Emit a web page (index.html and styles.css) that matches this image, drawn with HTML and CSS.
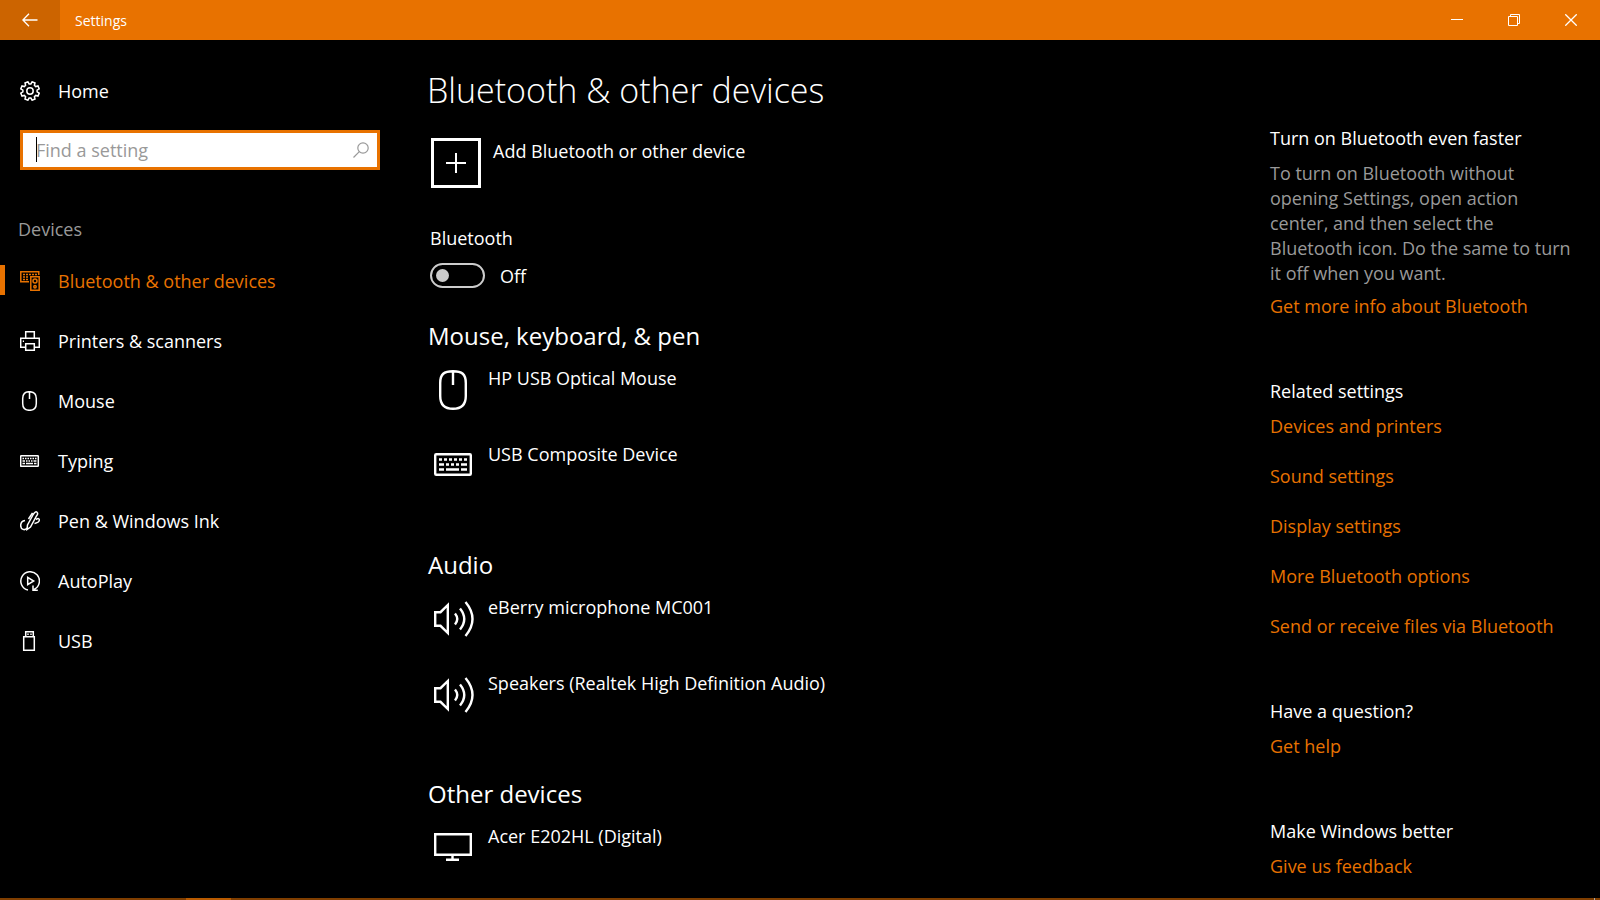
FILE: index.html
```html
<!DOCTYPE html>
<html lang="en">
<head>
<meta charset="utf-8">
<title>Settings</title>
<link rel="stylesheet" href="styles.css">
</head>
<body>
<div class="window">
  <header class="titlebar">
    <button class="back" aria-label="Back"><svg width="16" height="14" viewBox="0 0 16 14"><path d="M7 .8.9 7 7 13.200M1 7H15.500" /></svg></button>
    <span class="titlebar-name">Settings</span>
    <button class="caption" aria-label="Minimize"><svg width="12" height="12" viewBox="0 0 12 12"><path d="M0 5.500H12"/></svg></button>
    <button class="caption" aria-label="Restore"><svg width="12" height="12" viewBox="0 0 12 12"><path d="M.5 2.500H9.500V11.500H.5ZM2.500 2.500V.5H11.500V9.500H9.500"/></svg></button>
    <button class="caption" aria-label="Close"><svg width="12" height="12" viewBox="0 0 12 12"><path stroke-width="1.300" d="M.3.3 11.700 11.700M11.700.3.3 11.700"/></svg></button>
  </header>

  <div class="layout">
    <nav class="sidebar" aria-label="Settings">
      <a class="nav-link" href="#home">
        <svg width="20" height="20" viewBox="0 0 20 20"><path d="M9.100 2.900h1.800L12.100.8 15 2l-.6 2.300 1.300 1.300L18 5l1.200 2.900-2.100 1.200v1.800l2.100 1.200L18 15l-2.300-.6-1.300 1.300L15 18l-2.900 1.200-1.200-2.100H9.100l-1.200 2.100L5 18l.6-2.300-1.300-1.300L2 15 .8 12.100l2.100-1.200V9.100L.8 7.900 2 5l2.300.6 1.300-1.300L5 2 7.900.8Z"/><circle cx="10" cy="10" r="3.200"/></svg>
        Home
      </a>
      <div class="search">
        <input class="search-input" type="search" placeholder="Find a setting" aria-label="Find a setting">
        <span class="caret"></span>
        <svg class="search-icon" width="16" height="16" viewBox="0 0 16 16"><circle cx="10" cy="6" r="5.200"/><path d="M6.300 9.700.5 15.500"/></svg>
      </div>
      <h2 class="nav-title">Devices</h2>
      <a class="nav-link active" href="#bluetooth">
        <svg width="20" height="20" viewBox="0 0 20 20"><path d="M9 10.800H.8V.8H18.800V4"/><path stroke-width="1.500" stroke-dasharray="2 1" d="M3 3.500H17M3 6H9M3 8.500H9"/><path d="M10.800 5.800H19.200V19.200H10.800Z"/><circle cx="15" cy="10" r="2"/><circle cx="15" cy="15.800" r="1.200"/></svg>
        Bluetooth &amp; other devices
      </a>
      <a class="nav-link" href="#printers">
        <svg width="20" height="20" viewBox="0 0 20 20"><path d="M5.700 7V.7H14.300V7M5 16.300H.7V7.300H19.300V16.300H15M5.700 12.700H14.300V19.300H5.700Z"/><path d="M2.800 10.200H4"/></svg>
        Printers &amp; scanners
      </a>
      <a class="nav-link" href="#mouse">
        <svg width="20" height="20" viewBox="0 0 20 20"><path d="M2.700 7.500Q2.700.7 9.500.7T16.300 7.500V12.500Q16.300 19.300 9.500 19.300T2.700 12.500ZM9.500 1V8"/></svg>
        Mouse
      </a>
      <a class="nav-link" href="#typing">
        <svg width="20" height="20" viewBox="0 0 20 20"><rect x=".7" y="4.700" width="17.600" height="10.600" rx=".6"/><path stroke-width="1.500" d="M2.500 7.500h1.500m1 0h1.500m1 0H9m1 0h1.500m1 0H14m1 0h1.500M2.500 10H5m1 0h1.500m1 0H10m1 0h1.500m1 0h3M2.500 12.500H5m1 0h7m1 0h2.500"/></svg>
        Typing
      </a>
      <a class="nav-link" href="#pen">
        <svg width="20" height="20" viewBox="0 0 20 20"><path d="M5 9.500C2 10 .7 12 .7 14.500c0 4 4.300 5.500 6 2.500M7 18.500 7.500 14 13.200 3.500Q15.500-.3 17 1.300T16.500 5L10.500 16ZM8.500 8 12.500 1.800M16 8.500Q19.300 6.500 19.300 9T14.500 12.500"/></svg>
        Pen &amp; Windows Ink
      </a>
      <a class="nav-link" href="#autoplay">
        <svg width="20" height="20" viewBox="0 0 20 20"><path d="M8 19.100A9.300 9.300 0 1 1 14 18.500M13 14.500V19.200H17.800M7.700 6.300 13.700 10l-6 3.700Z"/></svg>
        AutoPlay
      </a>
      <a class="nav-link" href="#usb">
        <svg width="20" height="20" viewBox="0 0 20 20"><path d="M3.700 5.700H14.300V19.300H3.700ZM5.700 5.500V.7H13.300V5.500M8 2.500V4M11 2.500V4"/></svg>
        USB
      </a>
    </nav>

    <main class="main">
      <h1 class="page-title">Bluetooth &amp; other devices</h1>
      <button class="add">
        <span class="add-box"><svg width="20" height="20" viewBox="0 0 20 20"><path d="M10 0V20M0 10H20"/></svg></span>
        Add Bluetooth or other device
      </button>
      <div class="setting">
        <label for="bt">Bluetooth</label>
        <div class="toggle-row"><input class="toggle" id="bt" type="checkbox" role="switch"><span>Off</span></div>
      </div>

      <section class="group">
        <h2 class="group-title">Mouse, keyboard, &amp; pen</h2>
        <ul class="devices">
          <li class="device"><svg width="50" height="50" viewBox="0 0 50 50"><path d="M10.200 17C10.200 8 14 5.200 23 5.200S35.800 8 35.800 17V30Q35.800 42.800 23 42.800T10.200 30ZM23 5V19"/></svg>HP USB Optical Mouse</li>
          <li class="device"><svg width="50" height="50" viewBox="0 0 50 50"><rect x="5.200" y="12.200" width="35.600" height="20.600" rx="1"/><path d="M9 17.500h3m2 0h3m2 0h3m2 0h3m2 0h3m2 0h3M9 22.500h5m2 0h3m2 0h3m2 0h3m2 0h6M9 27.500h5m2 0h13m2 0h6"/></svg>USB Composite Device</li>
        </ul>
      </section>

      <section class="group">
        <h2 class="group-title">Audio</h2>
        <ul class="devices">
          <li class="device"><svg width="50" height="50" viewBox="0 0 50 50"><path d="M5.200 17.200H10.500L17.800 10V38L10.500 30.800H5.200ZM25 18.500Q29.500 24 25 29.500M30 13.500Q38.500 24 30 34.500M35.500 7Q49.500 24 35.500 41"/></svg>eBerry microphone MC001</li>
          <li class="device"><svg width="50" height="50" viewBox="0 0 50 50"><path d="M5.200 17.200H10.500L17.800 10V38L10.500 30.800H5.200ZM25 18.500Q29.500 24 25 29.500M30 13.500Q38.500 24 30 34.500M35.500 7Q49.500 24 35.500 41"/></svg>Speakers (Realtek High Definition Audio)</li>
        </ul>
      </section>

      <section class="group">
        <h2 class="group-title">Other devices</h2>
        <ul class="devices">
          <li class="device"><svg width="50" height="50" viewBox="0 0 50 50"><path d="M5.200 10.200H40.800V30.800H5.200ZM22.500 31V35.500M16 35.700H29"/></svg>Acer E202HL (Digital)</li>
        </ul>
      </section>
    </main>

    <aside class="aside">
      <section class="help">
        <h3 class="help-title">Turn on Bluetooth even faster</h3>
        <p class="help-text">To turn on Bluetooth without opening Settings, open action center, and then select the Bluetooth icon. Do the same to turn it off when you want.</p>
        <a class="help-more" href="#info">Get more info about Bluetooth</a>
      </section>
      <section class="help">
        <h3 class="help-title">Related settings</h3>
        <ul class="links">
          <li><a href="#printers">Devices and printers</a></li>
          <li><a href="#sound">Sound settings</a></li>
          <li><a href="#display">Display settings</a></li>
          <li><a href="#more">More Bluetooth options</a></li>
          <li><a href="#files">Send or receive files via Bluetooth</a></li>
        </ul>
      </section>
      <section class="help">
        <h3 class="help-title">Have a question?</h3>
        <a href="#help">Get help</a>
      </section>
      <section class="help">
        <h3 class="help-title">Make Windows better</h3>
        <a href="#feedback">Give us feedback</a>
      </section>
    </aside>
  </div>
  <footer class="taskbar"><span class="task"></span><span class="show-desktop"></span></footer>
</div>
</body>
</html>
```
FILE: styles.css
```css
* { box-sizing: border-box; }

body {
  margin: 0;
  background: #000;
  color: #fff;
  font: 18px/24px "Open Sans", "Noto Sans", sans-serif;
}

h1, h2, h3, p, ul { margin: 0; padding: 0; font-weight: 400; }
ul { list-style: none; }
button { margin: 0; padding: 0; border: 0; background: none; color: inherit; font: inherit; text-align: left; }
svg { flex: none; fill: none; stroke: currentColor; stroke-width: 1.5; }
a { color: #e87200; text-decoration: none; }

.window { display: flex; flex-direction: column; min-height: 100vh; }

.titlebar { display: flex; align-items: stretch; height: 40px; padding-right: 1px; background: #e87200; }
.titlebar svg { stroke-width: 1; }
.titlebar-name { flex: 1; padding-left: 15px; font-size: 14px; line-height: 42px; }
.back { display: grid; place-items: center; width: 60px; background: #cc6400; }
.back svg { stroke-width: 1.3; }
.caption { display: grid; place-items: center; width: 57px; }

.layout { flex: 1; display: grid; grid-template-columns: 430px 1fr 330px; }

.sidebar { padding: 21px 50px 0 0; }
.nav-link { position: relative; display: flex; align-items: center; gap: 18px; height: 60px; padding-left: 20px; color: #fff; }
.nav-link.active { color: #e87200; }
.nav-link.active::before { content: ""; position: absolute; left: 0; top: 14px; width: 5px; height: 30px; background: #e87200; }
.search { position: relative; margin: 9px 0 47px 20px; }
.search-input {
  display: block; width: 100%; height: 40px; padding: 0 40px 0 13px;
  border: 3px solid #e87200; border-radius: 0; outline: 0; appearance: none;
  background: #fff; color: #000; font: inherit;
}
.search-input::placeholder { color: #999; opacity: 1; }
.caret { position: absolute; left: 16px; top: 7px; width: 1px; height: 25px; background: #000; }
.search-icon { position: absolute; right: 11px; top: 12px; color: #999; stroke-width: 1.2; }
.nav-title { padding: 0 0 10px 18px; color: #999; font-size: 18px; }

.main { padding-top: 26px; }
.page-title { margin-left: -3px; font-size: 34px; font-weight: 300; line-height: 48px; }
.add { display: flex; gap: 12px; margin: 24px 0 38px 1px; line-height: 26px; }
.add-box { display: grid; place-items: center; width: 50px; height: 50px; border: 3px solid #fff; }
.add-box svg { stroke-width: 2; }
.setting label { display: block; }
.toggle-row { display: flex; align-items: center; gap: 15px; margin-top: 13px; }
.toggle {
  appearance: none; display: flex; align-items: center; width: 55px; height: 25px; margin: 0; padding-left: 4px;
  border: 2px solid #ccc; border-radius: 13px;
}
.toggle::before { content: ""; width: 13px; height: 13px; border-radius: 50%; background: #ccc; }
.toggle:checked { justify-content: flex-end; padding: 0 4px 0 0; border-color: #e87200; background: #e87200; }
.group { margin-top: 32px; }
.group + .group { margin-top: 31px; }
.group-title { margin: 0 0 14px -2px; font-size: 24px; line-height: 32px; }
.device { display: flex; gap: 8px; height: 76px; }
.device svg { stroke-width: 2.4; }
.group:last-child .device { height: 50px; }

.aside { padding-top: 86px; }
.help { margin-bottom: 61px; }
.help:last-child { margin-bottom: 0; }
.help-title { margin-bottom: 11px; font-size: 18px; }
.help a { display: block; }
.help-text { max-width: 304px; margin-bottom: 8px; color: #999; line-height: 25px; }
.links { display: grid; gap: 26px; }

.taskbar { display: flex; height: 2px; background: #803e00; }
.task { width: 45px; margin-left: 186px; background: #b85a00; }
.show-desktop { width: 1px; margin: 0 5px 0 auto; background: #aaa; }
```
